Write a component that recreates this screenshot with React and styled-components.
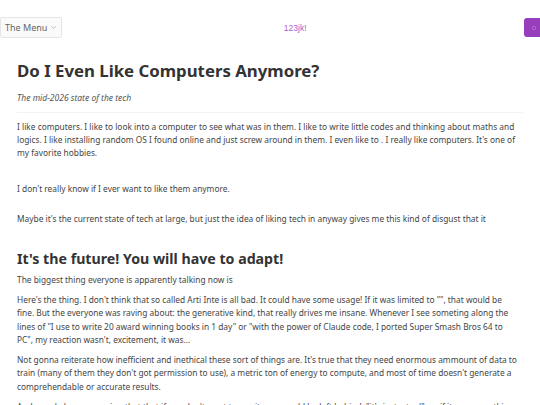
import React from 'react'
import styled, { createGlobalStyle } from 'styled-components'

const GlobalStyle = createGlobalStyle`
  html, body {
    margin: 0;
    padding: 0;
    background: #ffffff;
  }
  body {
    font-family: "Noto Sans", "Open Sans", sans-serif;
    overflow: hidden;
  }
`

function ChevronDown() {
  return (
    <svg width="7" height="7" viewBox="0 0 24 24" fill="none" stroke="#888" strokeWidth="2" strokeLinecap="round" strokeLinejoin="round">
      <path d="m6 9 6 6 6-6" />
    </svg>
  )
}

function App() {
  return (
    <>
      <GlobalStyle />
      <Header>
        <MenuButton>
          The Menu <ChevronDown />
        </MenuButton>
        <SiteName>123jk!</SiteName>
        <ThemeButton>
          <svg width="8" height="8" viewBox="0 0 24 24" fill="none" stroke="rgba(255,255,255,0.25)" strokeWidth="2.5">
            <circle cx="12" cy="12" r="5" />
          </svg>
        </ThemeButton>
      </Header>
      <Article>
        <Title>Do I Even Like Computers Anymore?</Title>
        <Subtitle>The mid-2026 state of the tech</Subtitle>
        <Divider />
        <Para>
          I like computers. I like to look into a computer to see what was in them. I like to write little codes and thinking about maths and
          logics. I like installing random OS I found online and just screw around in them. I even like to . I really like computers. It's one of
          my favorite hobbies.
        </Para>
        <Para $gap={22}>I don't really know if I ever want to like them anymore.</Para>
        <Para $gap={16.5}>Maybe it's the current state of tech at large, but just the idea of liking tech in anyway gives me this kind of disgust that it</Para>
        <Heading>It's the future! You will have to adapt!</Heading>
        <Para $gap={4}>The biggest thing everyone is apparently talking now is</Para>
        <Para>
          Here's the thing. I don't think that so called Arti Inte is all bad. It could have some usage! If it was limited to "", that would be<br />
          fine. But the everyone was raving about: the generative kind, that really drives me insane. Whenever I see someting along the
          lines of "I use to write 20 award winning books in 1 day" or "with the power of Claude code, I ported Super Smash Bros 64 to<br />
          PC", my reaction wasn't, excitement, it was...
        </Para>
        <Para>
          Not gonna reiterate how inefficient and inethical these sort of things are. It's true that they need enormous ammount of data to
          train (many of them they don't got permission to use), a metric ton of energy to compute, and most of time doesn't generate a
          comprehendable or accurate results.
        </Para>
        <Para>
          And people keep on saying that that if you don't want to use it, you would be left behind, "it's just a tool", as if it was something
          that everyone should want.
        </Para>
      </Article>
    </>
  )
}

const Header = styled.header`
  display: flex;
  align-items: center;
  justify-content: space-between;
  height: 21px;
  padding: 17px 0 0 0;
`

const MenuButton = styled.button`
  display: flex;
  align-items: center;
  gap: 3px;
  height: 21px;
  padding: 0 4px;
  margin: 0;
  border: 1px solid #e6e6e6;
  border-radius: 2px;
  background: #fafafa;
  color: #666;
  font-family: "Noto Sans", sans-serif;
  font-size: 9px;
`

const SiteName = styled.div`
  font-family: "Liberation Sans", Arial, sans-serif;
  font-size: 8.5px;
  color: #b35bd0;
  margin-left: 4px;
`

const ThemeButton = styled.button`
  display: flex;
  align-items: center;
  justify-content: center;
  width: 20px;
  height: 19px;
  margin-right: -4px;
  padding: 0;
  border: none;
  border-radius: 3px;
  background: #973ebd;
`

const Article = styled.main`
  padding: 22px 17.5px 0 17px;
`

const Title = styled.h1`
  margin: 0;
  font-size: 16.8px;
  font-weight: 700;
  color: #333;
  line-height: 22px;
`

const Subtitle = styled.p`
  margin: 10px 0 0;
  font-size: 8.5px;
  line-height: 12px;
  font-style: italic;
  color: #555;
`

const Divider = styled.hr`
  border: none;
  border-top: 1px solid #f3f3f3;
  margin: 8px 0 6px;
`

const Para = styled.p`
  margin: ${p => p.$gap ?? 6.5}px 0 0;
  font-size: 8.35px;
  line-height: 13.4px;
  color: #454545;
`

const Heading = styled.h2`
  margin: 24px 0 0;
  font-size: 14.2px;
  font-weight: 700;
  color: #333;
  line-height: 20px;
`

export default App
